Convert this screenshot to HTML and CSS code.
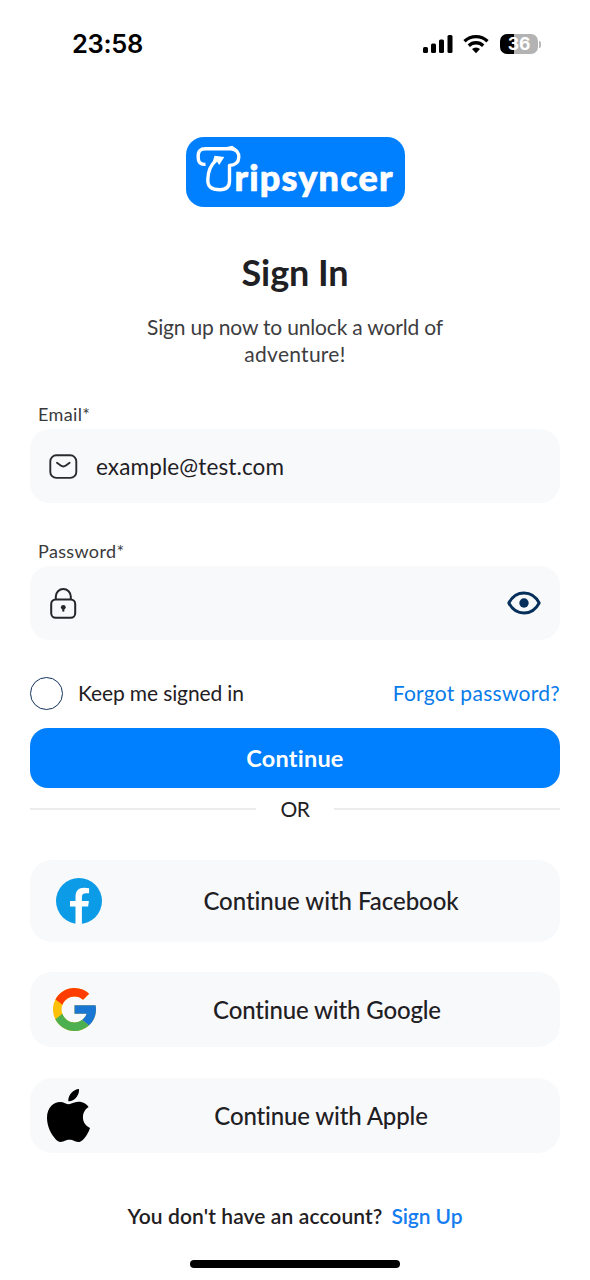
FILE: index.html
```
<!DOCTYPE html>
<html lang="en">
<head>
<meta charset="utf-8">
<title>Tripsyncer – Sign In</title>
<link rel="stylesheet" href="styles.css">
</head>
<body>
<div class="screen">
  <header class="status">
    <span class="time">23:58</span>
    <div class="status-icons">
      <svg width="30" height="20" viewBox="0 0 30 20"><rect x="0" y="13" width="5" height="6" rx="1.5"/><rect x="8" y="9.500" width="5" height="9.500" rx="1.500"/><rect x="16" y="5.500" width="5" height="13.500" rx="1.500"/><rect x="24.500" y="1" width="5" height="18" rx="1.500"/></svg>
      <svg class="wifi" width="26" height="20" viewBox="0 0 26 20"><g fill="none" stroke="#000" stroke-width="3.300"><path d="M1.500 7.200a16.500 16.500 0 0 1 23 0"/><path d="M5.800 11.700a10.300 10.300 0 0 1 14.400 0"/></g><path d="M13 19.200l-4-4.200a5.900 5.900 0 0 1 8 0z"/></svg>
      <div class="battery"><span>36</span></div><i class="battery-tip"></i>
    </div>
  </header>

  <main>
    <div class="logo">
      <svg width="219" height="70" viewBox="0 0 219 70">
        <path fill="none" stroke="#fff" stroke-width="3.400" stroke-linejoin="round" d="M19.500 27.300C13.800 28 12.200 24.500 12.200 20.500C11.800 14 14.500 11.800 19.500 11.800H45C50.500 12.300 53 16 52.800 20.500C52.500 25.500 49.500 28.200 43.500 28.500V44C43.500 50.500 40 52.700 34 52.700C25.500 52.700 21.600 50 21.800 42.500C22 34 24.500 28 30 23.500"/>
        <path fill="#fff" d="M28.500 18.800L38.300 20.100L33.200 28L31 24.500L26.500 25.500z"/>
        <path fill="none" stroke="#fff" stroke-width="2" d="M41 11L46 9.800L51 13.500"/>
        <text class="wordmark" x="48.500" y="53.500" textLength="158" lengthAdjust="spacing">ripsyncer</text>
      </svg>
    </div>

    <h1>Sign In</h1>
    <p class="intro">Sign up now to unlock a world of<br><span>adventure!</span></p>

    <form>
      <label class="caption">Email*</label>
      <div class="field">
        <svg width="30" height="28" viewBox="0 0 30 28" fill="none" stroke="#292b2e" stroke-width="1.900" stroke-linecap="round" stroke-linejoin="round"><rect x="1.300" y="3.300" width="26" height="22.600" rx="6"/><path d="M8 10.800l3.700 2.800q2.600 1.900 5.200 0l3.700-2.800"/></svg>
        <span class="value">example@test.com</span>
      </div>

      <label class="caption password-caption">Password*</label>
      <div class="field">
        <svg width="30" height="34" viewBox="0 0 30 34" fill="none" stroke="#24262a" stroke-width="2"><rect x="2.200" y="13.500" width="24" height="18.300" rx="4.500"/><path d="M6.800 13.500v-3a7.500 7.500 0 0 1 15 0v3"/><circle cx="14.300" cy="21.300" r="2.400" fill="#24262a" stroke="none"/><path d="M14.300 22v3.600"/></svg>
        <svg class="eye" width="34" height="26" viewBox="0 0 34 26"><path d="M1.800 13C8.800-.4 25.200-.4 32.200 13C25.200 26.400 8.800 26.400 1.800 13z" fill="none" stroke="#06305b" stroke-width="2.900" stroke-linejoin="round"/><circle cx="17" cy="13" r="4.700" fill="#06305b"/></svg>
      </div>

      <div class="options">
        <i class="check"></i>
        <span class="keep">Keep me signed in</span>
        <a class="forgot">Forgot password?</a>
      </div>

      <div class="submit">Continue</div>
    </form>

    <div class="divider"><i></i><span>OR</span><i></i></div>

    <div class="social facebook">
      <svg width="46" height="46" viewBox="0 0 46 46"><circle cx="23" cy="23" r="23" fill="#0c9be6"/><path fill="#fff" d="M19.500 46V28.600H14V23h5.500v-4.200c0-5.900 3.200-9 8.600-9 1.900 0 3.600.2 5 .4v5h-3c-3.200 0-4.200 1.300-4.200 3.900V23h7l-.8 5.600h-6.200V46z"/></svg>
      <span>Continue with Facebook</span>
    </div>
    <div class="social google">
      <svg width="43" height="43" viewBox="4 4 40 40"><path fill="#FFC107" d="M43.611 20.083H42V20H24v8h11.303c-1.649 4.657-6.080 8-11.303 8-6.627 0-12-5.373-12-12s5.373-12 12-12c3.059 0 5.842 1.154 7.961 3.039l5.657-5.657C34.046 6.053 29.268 4 24 4 12.955 4 4 12.955 4 24s8.955 20 20 20 20-8.955 20-20c0-1.341-.138-2.650-.389-3.917z"/><path fill="#FF3D00" d="M6.306 14.691l6.571 4.819C14.655 15.108 18.961 12 24 12c3.059 0 5.842 1.154 7.961 3.039l5.657-5.657C34.046 6.053 29.268 4 24 4 16.318 4 9.656 8.337 6.306 14.691z"/><path fill="#4CAF50" d="M24 44c5.166 0 9.860-1.977 13.409-5.192l-6.190-5.238C29.211 35.091 26.715 36 24 36c-5.202 0-9.619-3.317-11.283-7.946l-6.522 5.025C9.505 39.556 16.227 44 24 44z"/><path fill="#1976D2" d="M43.611 20.083H42V20H24v8h11.303c-.792 2.237-2.231 4.166-4.087 5.571l6.193 5.238C36.971 39.205 44 34 44 24c0-1.341-.138-2.650-.389-3.917z"/></svg>
      <span>Continue with Google</span>
    </div>
    <div class="social apple">
      <svg width="43" height="53" viewBox="0 0 814 1000" preserveAspectRatio="none"><path d="M788.100 340.900c-5.800 4.500-108.200 62.200-108.200 190.500 0 148.400 130.300 200.900 134.200 202.200-.6 3.200-20.700 71.900-68.700 141.900-42.800 61.600-87.500 123.100-155.500 123.100s-85.500-39.500-164-39.500c-76.500 0-103.700 40.800-165.900 40.800s-105.600-57-155.500-127C46.700 790.700 0 663 0 541.800c0-194.400 126.400-297.500 250.800-297.500 66.100 0 121.200 43.400 162.700 43.400 39.500 0 101.100-46 176.300-46 28.500 0 130.900 2.600 198.300 99.200zM554.100 159.400c31.100-36.900 53.100-88.100 53.100-139.300 0-7.100-.6-14.300-1.900-20.100-50.600 1.900-110.800 33.700-147.100 75.800-28.500 32.400-55.100 83.600-55.100 135.500 0 7.800 1.300 15.600 1.900 18.100 3.200.6 8.400 1.300 13.600 1.300 45.400 0 102.500-30.400 135.500-71.300z"/></svg>
      <span>Continue with Apple</span>
    </div>

    <p class="signup"><span>You don't have an account?</span><a>Sign Up</a></p>
  </main>
  <div class="home-bar"></div>
</div>
</body>
</html>
```
FILE: styles.css
```
* { box-sizing: border-box; }
body {
  margin: 0;
  background: #fff;
  color: #1f2023;
  font-family: Lato, sans-serif;
  font-variant-ligatures: none;
}
svg { display: block; flex: none; }
.screen { width: 590px; height: 1280px; overflow: hidden; }

.status {
  height: 88px;
  padding: 0 49px 0 72px;
  display: flex;
  align-items: center;
  justify-content: space-between;
  color: #000;
}
.time { font: 600 25.500px/30px Inter, sans-serif; letter-spacing: -0.300px; }
.status-icons { display: flex; align-items: center; }
.wifi { margin-left: 10px; }
.battery {
  width: 38px;
  height: 20px;
  margin-left: 11px;
  border-radius: 7px;
  background: linear-gradient(90deg, #000 36%, #b3b3b3 36%);
  color: #fff;
  font: 700 17.500px/20px Inter, sans-serif;
  text-align: center;
}
.battery-tip {
  width: 2px;
  height: 7px;
  margin-left: 1px;
  border-radius: 0 3px 3px 0;
  background: #b8b8b8;
}

main { padding: 49px 30px 0; }
.logo {
  width: 219px;
  height: 70px;
  margin: 0 auto;
  border-radius: 18px;
  background: #007fff;
}
.wordmark {
  font: 900 36px Lato, sans-serif;
  fill: #fff;
  stroke: #fff;
  stroke-width: 0.700px;
  stroke-linejoin: round;
}
h1 {
  margin: 43px 0 0;
  font-size: 36px;
  line-height: 44px;
  font-weight: 700;
  letter-spacing: -0.100px;
  text-align: center;
}
.intro {
  margin: 20px 0 0;
  font-size: 21px;
  line-height: 26.500px;
  letter-spacing: -0.180px;
  color: #3d3d3f;
  text-align: center;
}
.intro span { letter-spacing: 0.270px; }

.caption {
  display: block;
  height: 20px;
  margin: 37px 0 5px 8px;
  font-size: 18px;
  line-height: 20px;
  letter-spacing: 0.360px;
  color: #39393c;
}
.password-caption { margin-top: 38px; }
.field {
  height: 74px;
  padding: 0 19px;
  border-radius: 20px;
  background: #f8f9fb;
  display: flex;
  align-items: center;
}
.value { margin-left: 17px; font-size: 22.500px; letter-spacing: 0.130px; }
.eye { margin-left: auto; }

.options {
  height: 34px;
  margin-top: 36px;
  display: flex;
  align-items: center;
  font-size: 21px;
  line-height: 24px;
}
.check { width: 33px; height: 33px; border: 1.500px solid #12335c; border-radius: 50%; }
.keep { margin-left: 15px; letter-spacing: -0.120px; }
.forgot { margin-left: auto; color: #087bea; letter-spacing: 0.290px; }
.submit {
  height: 60px;
  margin-top: 18px;
  border-radius: 18px;
  background: #007fff;
  color: #fff;
  font-size: 23.500px;
  line-height: 61px;
  font-weight: 700;
  letter-spacing: 0.200px;
  text-align: center;
}
.divider {
  height: 42px;
  display: grid;
  grid-template-columns: 226px 1fr 226px;
  align-items: center;
  font-size: 21px;
  line-height: 24px;
  text-align: center;
}
.divider i { height: 2px; background: #ececee; }
.divider span { letter-spacing: -0.600px; }

.social {
  display: flex;
  align-items: center;
  border-radius: 22px;
  background: #f8f9fb;
  font-size: 24px;
  line-height: 28px;
  font-weight: 500;
  letter-spacing: -0.150px;
}
.social span { flex: 1; text-align: center; }
.facebook { height: 82px; margin-top: 30px; padding-left: 26px; letter-spacing: -0.050px; }
.facebook span { padding-bottom: 1px; }
.google { height: 75px; margin-top: 30px; padding: 0 2px 0 23px; }
.apple { height: 75px; margin-top: 31px; padding: 0 8px 0 17px; }

.signup {
  margin: 50px 0 0;
  display: flex;
  justify-content: center;
  gap: 9px;
  font-size: 21px;
  line-height: 26px;
  font-weight: 600;
  letter-spacing: 0.100px;
}
.signup a { color: #147df0; letter-spacing: -0.110px; }
.home-bar { width: 210px; height: 8px; margin: 31px auto 0; border-radius: 4px; background: #000; }
```
